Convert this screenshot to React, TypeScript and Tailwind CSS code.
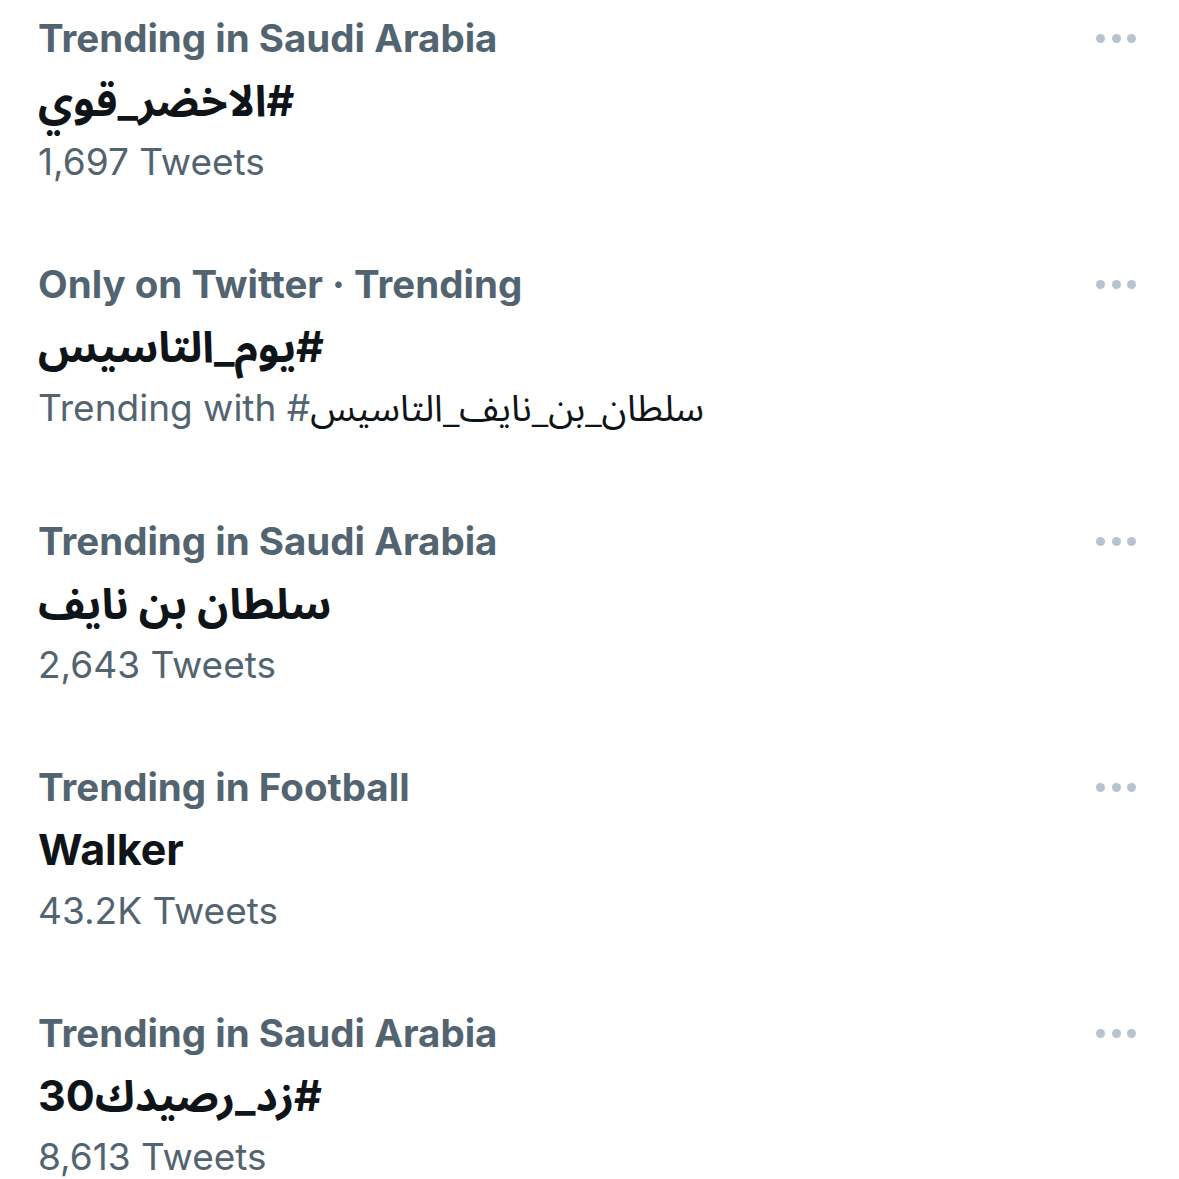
import React from "react";

const latin = "font-['Inter','Noto_Sans_Arabic','DejaVu_Sans',sans-serif]";

type Item = {
  category: string;
  title: string;
  titleRtl: boolean;
  sub: React.ReactNode;
  extra?: string;
};

const Dots = () => (
  <div className="flex h-[62px] items-center gap-[6.5px] pr-[43px]">
    <span className="h-[9px] w-[9px] rounded-full bg-[#b9c3cd]" />
    <span className="h-[9px] w-[9px] rounded-full bg-[#b9c3cd]" />
    <span className="h-[9px] w-[9px] rounded-full bg-[#b9c3cd]" />
  </div>
);

const items: Item[] = [
  {
    category: "Trending in Saudi Arabia",
    title: "#الاخضر_قوي",
    titleRtl: true,
    sub: "1,697 Tweets",
  },
  {
    category: "Only on Twitter · Trending",
    title: "#يوم_التاسيس",
    titleRtl: true,
    sub: (
      <>
        Trending with #<span className="font-['Noto_Sans_Arabic','DejaVu_Sans',sans-serif] text-[#0f1419]">سلطان_بن_نايف_التاسيس</span>
      </>
    ),
    extra: "pb-[71px]",
  },
  {
    category: "Trending in Saudi Arabia",
    title: "سلطان بن نايف",
    titleRtl: true,
    sub: "2,643 Tweets",
  },
  {
    category: "Trending in Football",
    title: "Walker",
    titleRtl: false,
    sub: "43.2K Tweets",
  },
  {
    category: "Trending in Saudi Arabia",
    title: "#زد_رصيدك30",
    titleRtl: true,
    sub: "8,613 Tweets",
  },
];

export default function App() {
  return (
    <div className={`h-[1179px] w-[1179px] overflow-hidden bg-white pt-[7px] ${latin}`}>
      {items.map((it, i) => (
        <div key={i} className={`flex items-start justify-between pl-[38px] ${it.extra ?? "pb-[60px]"}`}>
          <div className="flex flex-col">
            <div className="h-[62px] text-[38.5px] font-bold leading-[62px] text-[#536471]">
              {it.category}
            </div>
            <div className="h-[62px] text-[43px] font-bold leading-[62px] text-[#0f1419]">
              {it.titleRtl ? (
                <span dir="rtl" className="inline-block">
                  {it.title}
                </span>
              ) : (
                it.title
              )}
            </div>
            <div className="h-[62px] text-[37px] font-normal leading-[62px] text-[#536471]">
              {it.sub}
            </div>
          </div>
          <Dots />
        </div>
      ))}
    </div>
  );
}
